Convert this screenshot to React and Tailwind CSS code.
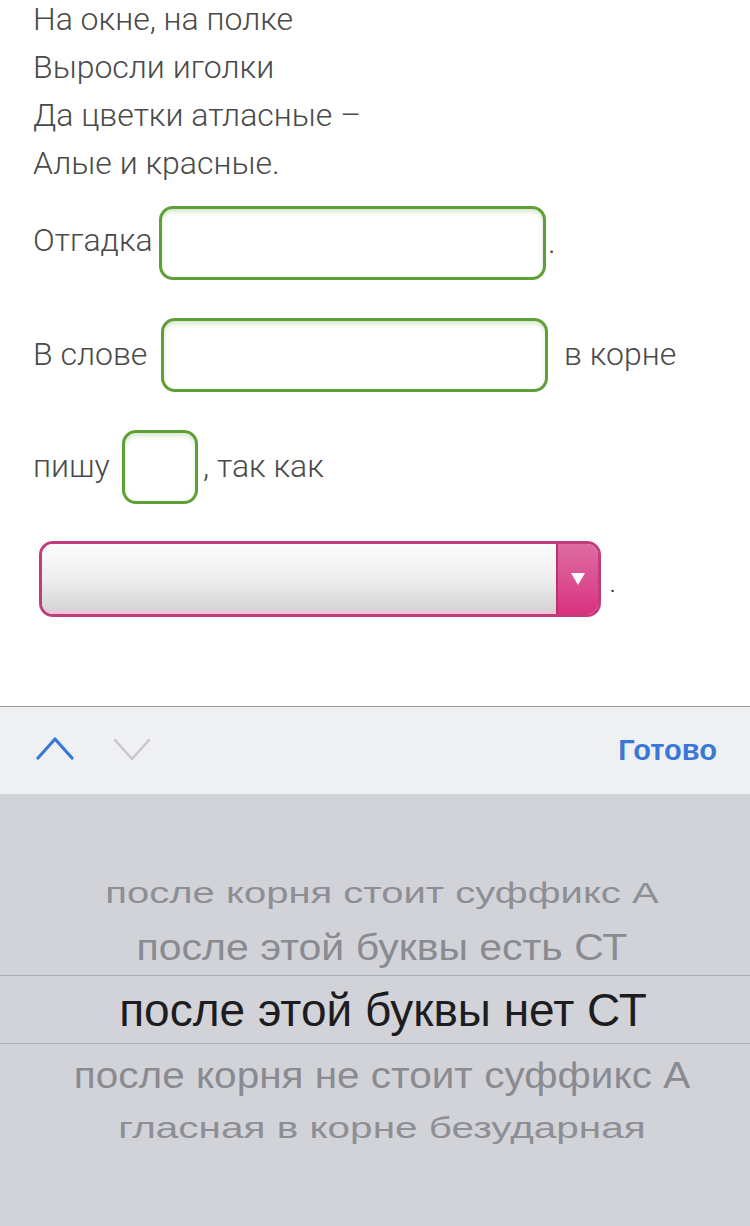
import React from "react";

function GreenBox({ className }) {
  return (
    <div
      className={
        "h-[74px] rounded-[14px] border-[3px] border-[#5f9f37] bg-white shadow-[inset_0_3px_4px_rgba(100,165,61,0.25)] " +
        className
      }
    />
  );
}

export default function App() {
  const roboto = { fontFamily: "Roboto, 'Noto Sans', sans-serif" };
  return (
    <div className="w-[750px] h-[1226px] bg-white flex flex-col overflow-hidden">
      {/* content */}
      <div
        className="h-[706px] shrink-0 px-[33px] text-[#4a4a4a] text-[32px] font-light"
        style={roboto}
      >
        <div className="mt-[-5px] leading-[48px]">
          <div>На окне, на полке</div>
          <div>Выросли иголки</div>
          <div>Да цветки атласные –</div>
          <div>Алые и красные.</div>
        </div>

        <div className="mt-[19px] flex items-center">
          <span className="w-[126px] shrink-0 whitespace-nowrap leading-[48px] mb-[6px]">Отгадка</span>
          <GreenBox className="w-[387px]" />
          <span className="leading-[48px] self-end mb-[14px] ml-[2px]">.</span>
        </div>

        <div className="mt-[38px] flex items-center">
          <span className="w-[128px] shrink-0 whitespace-nowrap leading-[48px] mb-[2px]">В слове</span>
          <GreenBox className="w-[387px]" />
          <span className="leading-[48px] mb-[2px] ml-[16px]">в корне</span>
        </div>

        <div className="mt-[38px] flex items-center">
          <span className="w-[89px] shrink-0 whitespace-nowrap leading-[48px] mb-[2px]">пишу</span>
          <GreenBox className="w-[76px]" />
          <span className="leading-[48px] mb-[2px] ml-[5px]">, так как</span>
        </div>

        <div className="mt-[37px] ml-[6px] flex items-center">
          <div className="w-[562px] h-[76px] rounded-[14px] border-[3px] border-[#c13d79] overflow-hidden flex">
            <div className="flex-1 bg-gradient-to-b from-[#fcfcfd] via-[#efefef] to-[#d4d4d4] border-b-[3px] border-[#f2c4d9]" />
            <div className="w-[42px] border-l-[2px] border-[#b9326f] bg-gradient-to-b from-[#dc6aa2] to-[#d92f80] flex items-center justify-center">
              <svg width="14" height="12" viewBox="0 0 14 12">
                <polygon points="0,0 14,0 7,12" fill="#ffffff" />
              </svg>
            </div>
          </div>
          <span className="ml-[9px] mt-[12px] text-[20px] font-normal leading-none text-[#333]">.</span>
        </div>
      </div>

      {/* toolbar */}
      <div className="h-[88px] shrink-0 border-t border-[#9f9f9f] bg-[#eff0f2] flex items-center px-[36px]">
        <svg width="38" height="24" viewBox="0 0 38 24" className="mt-[-4px]">
          <polyline
            points="2,21 19,2 36,21"
            fill="none"
            stroke="#3a78d8"
            strokeWidth="3.2"
            strokeLinecap="round"
            strokeLinejoin="round"
          />
        </svg>
        <svg width="38" height="24" viewBox="0 0 38 24" className="ml-[39px] mt-[-4px]">
          <polyline
            points="2,3 19,22 36,3"
            fill="none"
            stroke="#c9c9cc"
            strokeWidth="2.6"
            strokeLinecap="round"
            strokeLinejoin="round"
          />
        </svg>
        <div
          className="ml-auto mr-[-3px] text-[29px] font-bold text-[#3a78d8]"
          style={{ fontFamily: "'Liberation Sans', Arial, sans-serif" }}
        >
          Готово
        </div>
      </div>

      {/* picker */}
      <div
        className="flex-1 bg-[#d1d3d9] flex flex-col pt-[72px]"
        style={{ fontFamily: "'Liberation Sans', Arial, sans-serif" }}
      >
        <div className="h-[54px] flex items-center justify-center pl-[14px] text-[40px] text-[#8e8f94] scale-y-[0.72]">
          после корня стоит суффикс А
        </div>
        <div className="h-[55px] flex items-center justify-center pl-[14px] text-[41px] text-[#8a8b90] scale-y-[0.9]">
          после этой буквы есть СТ
        </div>
        <div className="h-[69px] border-y border-[#a9abb1] flex items-center justify-center pl-[16px] text-[46px] text-[#1d1d1f]">
          <span className="mt-[1px]">после этой буквы нет СТ</span>
        </div>
        <div className="h-[62px] flex items-center justify-center pl-[14px] text-[40.5px] text-[#8a8b90] scale-y-[0.9]">
          после корня не стоит суффикс А
        </div>
        <div className="h-[44px] flex items-center justify-center pl-[14px] text-[40.5px] text-[#8e8f94] scale-y-[0.72]">
          гласная в корне безударная
        </div>
      </div>
    </div>
  );
}
